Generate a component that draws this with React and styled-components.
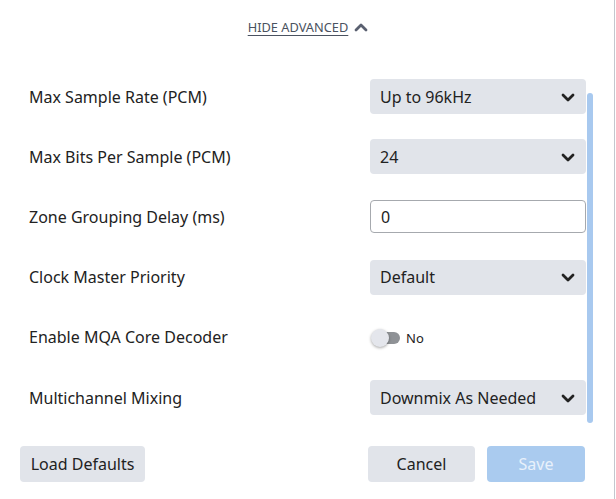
import React from "react";
import styled, { createGlobalStyle } from "styled-components";

const Global = createGlobalStyle`
  html, body { margin: 0; padding: 0; background: #fff; }
  body { font-family: "Noto Sans", "Open Sans", sans-serif; color: #222; }
`;

const Panel = styled.div`
  position: relative;
  width: 614px;
  height: 499px;
  border-right: 1px solid #c3c7ce;
  display: flex;
  flex-direction: column;
  overflow: hidden;
`;

const AdvToggle = styled.div`
  display: flex;
  justify-content: center;
  align-items: center;
  gap: 6px;
  padding-top: 17px;
  height: 20px;
  padding-left: 2px;
`;

const AdvLink = styled.span`
  font-size: 12.8px;
  color: #4a5260;
  text-decoration: underline;
  text-underline-offset: 3px;
`;

const Scroll = styled.div`
  position: relative;
  margin-top: 42px;
  height: 354px;
  display: flex;
  flex-direction: column;
`;

const ScrollThumb = styled.div`
  position: absolute;
  right: 21px;
  top: 14px;
  width: 6px;
  height: 330px;
  border-radius: 3px;
  background: #a8c9ef;
`;

const Row = styled.div`
  display: flex;
  align-items: center;
  justify-content: space-between;
  height: 60.2px;
  padding: 0 28px 0 29px;
  &:first-child { margin-top: -12.5px; }
`;

const Label = styled.div`
  font-size: 16px;
  color: #222;
`;

const Select = styled.div`
  width: 216px;
  height: 35px;
  box-sizing: border-box;
  background: #e1e4ea;
  border-radius: 4px;
  display: flex;
  align-items: center;
  justify-content: space-between;
  padding: 0 11px 0 10px;
  font-size: 16px;
  color: #222;
`;

const Input = styled.div`
  width: 216px;
  height: 33px;
  box-sizing: border-box;
  border: 1px solid #a6a9ae;
  border-radius: 4px;
  display: flex;
  align-items: center;
  padding: 0 10px;
  font-size: 16px;
  color: #222;
  background: #fff;
`;

const SwitchWrap = styled.div`
  width: 216px;
  display: flex;
  align-items: center;
  gap: 6px;
  font-size: 13px;
  color: #222;
  padding-top: 2px;
`;

const Track = styled.div`
  position: relative;
  width: 27px;
  height: 12px;
  border-radius: 6px;
  background: #8f9296;
  margin-left: 3px;
`;

const Knob = styled.div`
  position: absolute;
  left: -2px;
  top: -3px;
  width: 18px;
  height: 18px;
  border-radius: 50%;
  background: #e4e6ec;
  box-shadow: 0 1px 3px rgba(0, 0, 0, 0.35);
`;

const Footer = styled.div`
  display: flex;
  align-items: center;
  padding: 13px 29px 0 20px;
  gap: 12px;
`;

const Button = styled.button`
  height: 36px;
  border: none;
  border-radius: 4px;
  font-family: "Noto Sans", "Open Sans", sans-serif;
  font-size: 16px;
  padding: 0;
  width: ${(p) => p.$w}px;
  background: ${(p) => (p.$primary ? "#aacbef" : "#e1e4ea")};
  color: ${(p) => (p.$primary ? "#e8f1fb" : "#222")};
`;

const Spacer = styled.div`
  flex: 1;
`;

const Chevron = ({ up }) => (
  <svg width="14" height="10" viewBox="0 0 14 10">
    <path
      d={up ? "M2 8 L7 3 L12 8" : "M2 3 L7 8 L12 3"}
      fill="none"
      stroke={up ? "#5a6070" : "#222"}
      strokeWidth="2.8"
      strokeLinecap="round"
      strokeLinejoin="round"
    />
  </svg>
);

const rows = [
  { label: "Max Sample Rate (PCM)", type: "select", value: "Up to 96kHz" },
  { label: "Max Bits Per Sample (PCM)", type: "select", value: "24" },
  { label: "Zone Grouping Delay (ms)", type: "input", value: "0" },
  { label: "Clock Master Priority", type: "select", value: "Default" },
  { label: "Enable MQA Core Decoder", type: "switch", value: "No" },
  { label: "Multichannel Mixing", type: "select", value: "Downmix As Needed" },
];

export default function App() {
  return (
    <>
      <Global />
      <Panel>
        <AdvToggle>
          <AdvLink>HIDE ADVANCED</AdvLink>
          <Chevron up />
        </AdvToggle>
        <Scroll>
          {rows.map((r) => (
            <Row key={r.label}>
              <Label>{r.label}</Label>
              {r.type === "select" && (
                <Select>
                  <span>{r.value}</span>
                  <Chevron />
                </Select>
              )}
              {r.type === "input" && <Input>{r.value}</Input>}
              {r.type === "switch" && (
                <SwitchWrap>
                  <Track>
                    <Knob />
                  </Track>
                  <span>{r.value}</span>
                </SwitchWrap>
              )}
            </Row>
          ))}
          <ScrollThumb />
        </Scroll>
        <Footer>
          <Button $w={125}>Load Defaults</Button>
          <Spacer />
          <Button $w={107}>Cancel</Button>
          <Button $w={98} $primary>
            Save
          </Button>
        </Footer>
      </Panel>
    </>
  );
}
